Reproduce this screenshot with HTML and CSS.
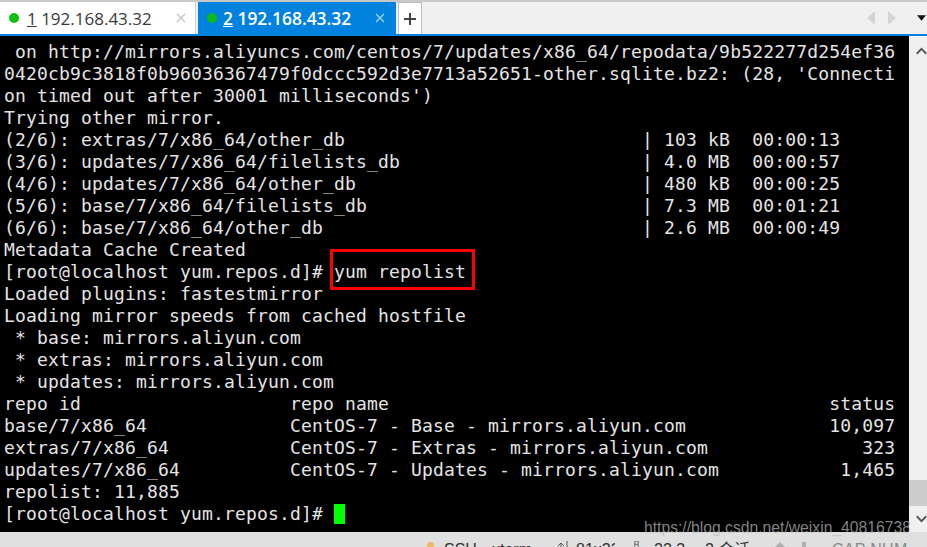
FILE: index.html
```html
<!DOCTYPE html>
<html lang="zh">
<head>
<meta charset="utf-8">
<title>Xshell</title>
<link rel="stylesheet" href="styles.css">
</head>
<body>
<div class="app">
  <header class="tabbar">
    <div class="tab">
      <span class="dot"></span>
      <span class="tab-label"><u>1</u> 192.168.43.32</span>
      <svg class="close" viewBox="0 0 10 10"><path d="M1 1l8 8M9 1l-8 8"/></svg>
    </div>
    <div class="tab active">
      <span class="dot"></span>
      <span class="tab-label"><u>2</u> 192.168.43.32</span>
      <svg class="close" viewBox="0 0 10 10"><path d="M1 1l8 8M9 1l-8 8"/></svg>
    </div>
    <div class="add"><svg viewBox="0 0 12 12"><path d="M6 0v12M0 6h12"/></svg></div>
    <div class="tab-nav">
      <svg class="nav" viewBox="0 0 8 14"><path d="M8 0v14L0 7z"/></svg>
      <svg class="nav" viewBox="0 0 8 14"><path d="M0 0v14l8-7z"/></svg>
      <svg class="menu" viewBox="0 0 10 6"><path d="M0 0h10L5 6z"/></svg>
    </div>
  </header>
  <main class="body">
<pre class="term"> on http://mirrors.aliyuncs.com/centos/7/updates/x86_64/repodata/9b522277d254ef36
0420cb9c3818f0b96036367479f0dccc592d3e7713a52651-other.sqlite.bz2: (28, 'Connecti
on timed out after 30001 milliseconds')
Trying other mirror.
(2/6): extras/7/x86_64/other_db                           | 103 kB  00:00:13
(3/6): updates/7/x86_64/filelists_db                      | 4.0 MB  00:00:57
(4/6): updates/7/x86_64/other_db                          | 480 kB  00:00:25
(5/6): base/7/x86_64/filelists_db                         | 7.3 MB  00:01:21
(6/6): base/7/x86_64/other_db                             | 2.6 MB  00:00:49
Metadata Cache Created
[root@localhost yum.repos.d]# <span class="mark">yum repolist</span>
Loaded plugins: fastestmirror
Loading mirror speeds from cached hostfile
 * base: mirrors.aliyun.com
 * extras: mirrors.aliyun.com
 * updates: mirrors.aliyun.com
repo id                   repo name                                        status
base/7/x86_64             CentOS-7 - Base - mirrors.aliyun.com             10,097
extras/7/x86_64           CentOS-7 - Extras - mirrors.aliyun.com              323
updates/7/x86_64          CentOS-7 - Updates - mirrors.aliyun.com           1,465
repolist: 11,885
[root@localhost yum.repos.d]# <span class="cursor"> </span></pre>
    <aside class="scrollbar">
      <svg class="arrow arrow-up" viewBox="0 0 10 7"><path d="M.7 6L5 1.5 9.3 6"/></svg>
      <div class="track"><div class="thumb"></div></div>
      <svg class="arrow arrow-down" viewBox="0 0 10 7"><path d="M.7 1L5 5.5 9.3 1"/></svg>
    </aside>
  </main>
  <footer class="status">
    <span class="s-item s-ssh"><svg class="lock" viewBox="0 0 10 10"><path d="M2.5 5V3a2.5 2.5 0 015 0v2"/><rect x="1" y="5" width="8" height="5"/></svg>SSH</span>
    <span class="s-item s-xterm">xterm</span>
    <span class="s-item s-size"><svg class="s-icon" viewBox="0 0 12 14"><path d="M3 14V2M0 5l3-3 3 3M9 0v12M6 9l3 3 3-3"/></svg>81x22</span>
    <span class="s-item s-pos"><svg class="s-icon s-icon-sm" viewBox="0 0 6 12"><path d="M1 0h4v12H1zM1 4h4M1 8h4"/></svg>22,31</span>
    <span class="s-item s-sess">2 会话</span>
    <span class="s-up"></span>
    <span class="s-bar"></span>
    <span class="s-caps">CAP NUM</span>
  </footer>
  <div class="watermark">https://blog.csdn.net/weixin_40816738</div>
</div>
</body>
</html>
```
FILE: styles.css
```css
* { box-sizing: border-box; }
html, body { margin: 0; height: 100%; overflow: hidden; }
.app {
  position: relative;
  display: flex;
  flex-direction: column;
  height: 547px;
  overflow: hidden;
  background: #e0e0e0;
  font-family: "Open Sans", "Noto Sans CJK SC", sans-serif;
}
.tabbar {
  flex: 0 0 36px;
  display: flex;
  align-items: flex-end;
  gap: 2px;
  background: #f0f0f0;
  border-top: 2px solid #c8c8c8;
  border-bottom: 2px solid #0082de;
}
.tab {
  width: 196px;
  height: 32px;
  display: flex;
  align-items: center;
  padding: 0 9px;
  background: #fff;
  color: #3a3a3a;
  font-size: 17px;
  border-right: 1px solid #d0d0d0;
}
.tab.active {
  width: 198px;
  background: #0082de;
  color: #fff;
  font-weight: 600;
  font-size: 17.4px;
  border-right: 0;
}
.dot {
  width: 10px;
  height: 10px;
  border-radius: 50%;
  background: #10c010;
  margin-right: 8px;
}
.tab.active .dot { background: #10b818; margin-right: 6px; }
.tab-label { flex: 1; white-space: pre; }
.close {
  width: 10px;
  height: 10px;
  fill: none;
  stroke: #c4c4c4;
  stroke-width: 1.3;
}
.active .close { stroke: #a8d4f4; margin-right: 2px; }
.add {
  width: 24px;
  height: 32px;
  display: flex;
  align-items: center;
  justify-content: center;
  background: #fff;
  border: 1px solid #bdbdbd;
  border-bottom: 0;
}
.add svg {
  width: 12px;
  height: 12px;
  fill: none;
  stroke: #444;
  stroke-width: 2;
}
.tab-nav {
  margin-left: auto;
  height: 32px;
  display: flex;
  align-items: center;
  padding-right: 1px;
}
.nav { width: 8px; height: 14px; fill: #d4d4d4; margin-right: 13px; }
.nav + .nav { margin-right: 21px; }
.menu { width: 9px; height: 6px; fill: #111; }
.body {
  flex: 0 0 496px;
  display: flex;
  min-height: 0;
}
.term {
  flex: 1;
  margin: 0;
  padding: 5px 0 0 4px;
  background: #000;
  color: #e4e4e4;
  font-family: "DejaVu Sans Mono", monospace;
  font-size: 18px;
  letter-spacing: 0.165px;
  line-height: 22px;
  overflow: hidden;
}
.mark { position: relative; }
.mark::after {
  content: "";
  position: absolute;
  left: -4px;
  right: -9px;
  top: -12px;
  bottom: -8px;
  border: 3px solid #f00;
}
.cursor {
  display: inline-block;
  width: 11px;
  height: 20px;
  vertical-align: -1px;
  background: #0f0;
}
.scrollbar {
  flex: 0 0 18px;
  display: flex;
  flex-direction: column;
  background: #f0f0f0;
}
.arrow {
  flex: none;
  align-self: flex-end;
  width: 11px;
  height: 8px;
  fill: none;
  stroke: #555;
  stroke-width: 1.7;
}
.arrow-up { margin-top: 11px; }
.arrow-down { margin: 9px 0; }
.track { flex: 1; display: flex; flex-direction: column; justify-content: flex-end; }
.thumb { height: 26px; background: #cdcdcd; }
.status {
  flex: none;
  height: 24px;
  display: flex;
  padding-top: 9px;
  font-family: "Liberation Sans", "Noto Sans CJK SC", sans-serif;
  font-size: 16px;
  line-height: 18px;
  color: #333;
  white-space: nowrap;
}
.s-item { display: inline-flex; overflow: hidden; }
.s-ssh { margin-left: 425px; width: 67px; }
.lock { width: 11px; height: 11px; margin: 1px 8px 0 0; fill: #f0b860; stroke: #f0b860; flex: none; }
.s-xterm { width: 66px; }
.s-size { width: 57px; margin-right: 19px; }
.s-pos { width: 52px; margin-right: 19px; }
.s-sess { width: 68px; }
.s-icon { width: 12px; height: 14px; margin: 0 6px 0 0; fill: none; stroke: #555; flex: none; }
.s-icon-sm { width: 5px; height: 10px; margin: 0 15px 0 0; }
.s-up {
  width: 0;
  height: 0;
  margin-top: 1px;
  border: 7px solid transparent;
  border-top: 0;
  border-bottom-color: #b0b0b0;
}
.s-bar { width: 4px; height: 14px; margin: 1px 0 0 15px; background: #b0b0b0; }
.s-caps { margin-left: 26px; color: #8a8a8a; letter-spacing: .3px; }
.watermark {
  position: absolute;
  left: 644px;
  top: 519px;
  font-family: "Liberation Sans", sans-serif;
  font-size: 15.7px;
  color: rgba(190,190,190,.7);
  white-space: nowrap;
}
```
